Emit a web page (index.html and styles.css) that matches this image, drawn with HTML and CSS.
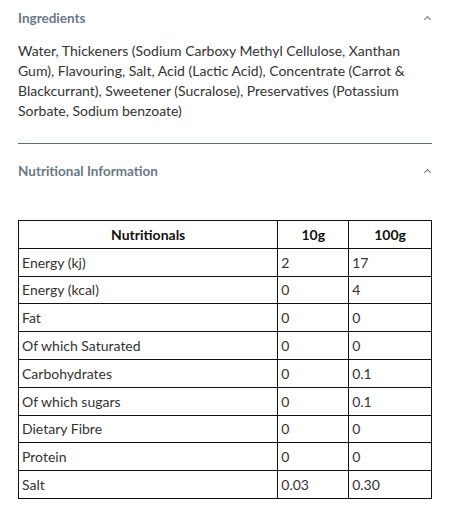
FILE: index.html
```html
<!DOCTYPE html>
<html lang="en">
<head>
  <meta charset="UTF-8">
  <meta name="viewport" content="width=device-width, initial-scale=1.0">
  <title>Product details</title>
  <link rel="stylesheet" href="styles.css">
</head>
<body>
  <div class="details">
    <!-- Ingredients -->
    <div class="section">
      <div class="section-head">
        <h3>Ingredients</h3>
        <span class="chevron"></span>
      </div>
      <p class="section-body">Water, Thickeners (Sodium Carboxy Methyl Cellulose, Xanthan Gum), Flavouring, Salt, Acid (Lactic Acid), Concentrate (Carrot &amp; Blackcurrant), Sweetener (Sucralose), Preservatives (Potassium Sorbate, Sodium benzoate)</p>
    </div>

    <!-- Nutritional information -->
    <div class="section last">
      <div class="section-head">
        <h3>Nutritional Information</h3>
        <span class="chevron"></span>
      </div>
      <table class="nutri">
        <thead>
          <tr>
            <th class="col-name">Nutritionals</th>
            <th class="col-10">10g</th>
            <th class="col-100">100g</th>
          </tr>
        </thead>
        <tbody>
          <tr><td>Energy (kj)</td><td>2</td><td>17</td></tr>
          <tr><td>Energy (kcal)</td><td>0</td><td>4</td></tr>
          <tr><td>Fat</td><td>0</td><td>0</td></tr>
          <tr><td>Of which Saturated</td><td>0</td><td>0</td></tr>
          <tr><td>Carbohydrates</td><td>0</td><td>0.1</td></tr>
          <tr><td>Of which sugars</td><td>0</td><td>0.1</td></tr>
          <tr><td>Dietary Fibre</td><td>0</td><td>0</td></tr>
          <tr><td>Protein</td><td>0</td><td>0</td></tr>
          <tr><td>Salt</td><td>0.03</td><td>0.30</td></tr>
        </tbody>
      </table>
    </div>
  </div>
</body>
</html>
```

FILE: styles.css
```css
* { box-sizing: border-box; margin: 0; padding: 0; }

body {
  font-family: 'Lato', 'Open Sans', sans-serif;
  background: #fff;
  color: #333;
}

.details {
  padding: 0 19px 0 18px;
}

.section {
  border-bottom: 1px solid #5f6e7a;
  padding-bottom: 22px;
}

.section.last {
  border-bottom: none;
}

.section-head {
  display: flex;
  align-items: center;
  justify-content: space-between;
  height: 35px;
  margin-bottom: 6px;
}

.section.last .section-head {
  margin-top: 9px;
  margin-bottom: 32px;
}

.section-head h3 {
  font-size: 13.5px;
  font-weight: 700;
  color: #6a7987;
}

.chevron {
  width: 5px;
  height: 5px;
  border-top: 1.5px solid #6a7987;
  border-left: 1.5px solid #6a7987;
  transform: rotate(45deg);
  margin-right: 2px;
  margin-top: 3px;
}

.section-body {
  font-size: 14px;
  line-height: 20px;
  color: #333;
  padding-right: 10px;
}

.nutri {
  width: 414px;
  border-collapse: collapse;
  font-size: 14px;
  color: #333;
}

.nutri th,
.nutri td {
  border: 1.5px solid #111;
  height: 27.8px;
  padding: 0 3px;
  text-align: left;
}

.nutri th {
  text-align: center;
  font-weight: 700;
  color: #111;
}

.col-name { width: 260px; }
.col-10 { width: 71px; }
.col-100 { width: 83px; }
```
